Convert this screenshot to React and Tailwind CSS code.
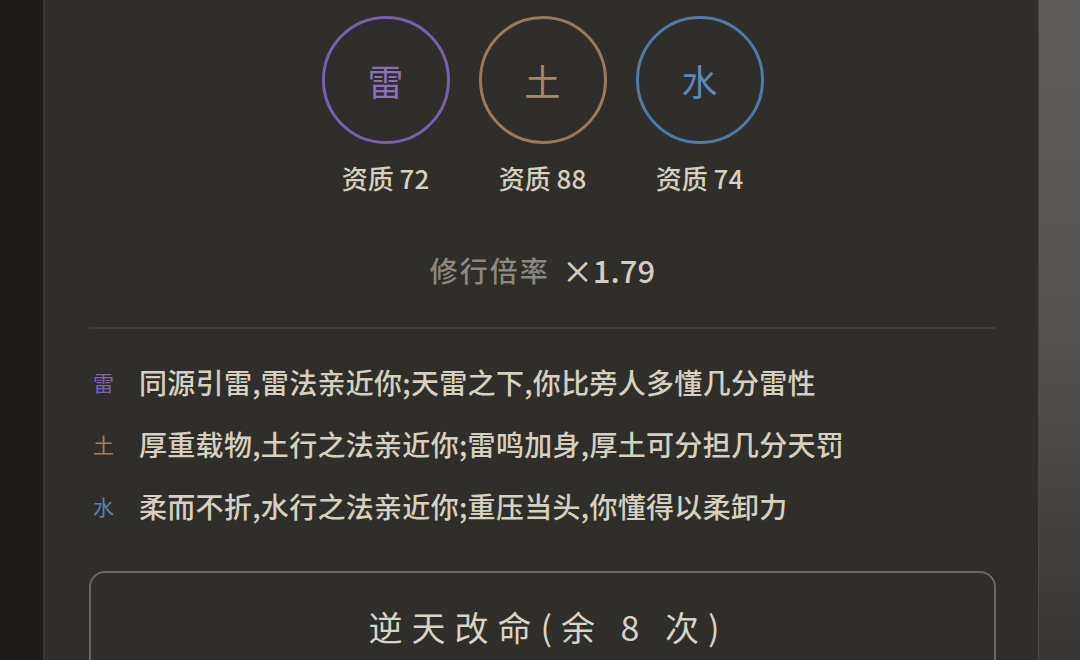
const roots = [
  { ch: '雷', score: 72, ring: 'border-[#7a5fae]', text: 'text-[#8a70bb]' },
  { ch: '土', score: 88, ring: 'border-[#9a7b57]', text: 'text-[#a8875e]' },
  { ch: '水', score: 74, ring: 'border-[#4f7aa8]', text: 'text-[#5d87b4]' },
];

const traits = [
  { ch: '雷', text: 'text-[#7e63b0]', desc: '同源引雷,雷法亲近你;天雷之下,你比旁人多懂几分雷性' },
  { ch: '土', text: 'text-[#a0805a]', desc: '厚重载物,土行之法亲近你;雷鸣加身,厚土可分担几分天罚' },
  { ch: '水', text: 'text-[#5a83ae]', desc: '柔而不折,水行之法亲近你;重压当头,你懂得以柔卸力' },
];

const sans = { fontFamily: '"Noto Sans CJK SC", "Noto Sans", sans-serif' };

export default function App() {
  return (
    <div className="flex h-[660px] w-[1080px] overflow-hidden bg-[#1c1a18]" style={sans}>
      <div className="w-[45px] shrink-0 border-r-2 border-[#3b3935] bg-[#1c1a18]" />

      <div className="flex-1 bg-[#302e2a] pl-[44px] pr-[42px]">
        {/* spirit roots */}
        <div className="flex justify-center gap-[29px] pt-[16px]">
          {roots.map((r) => (
            <div key={r.ch} className="flex w-[128px] flex-col items-center">
              <div className={`flex h-[128px] w-[128px] items-center justify-center rounded-full border-[3px] ${r.ring}`}>
                <span className={`text-[36px] leading-none ${r.text}`}>{r.ch}</span>
              </div>
              <div className="mt-[16px] text-[26px] font-medium leading-[36px] text-[#d6d0c0]">
                资质 {r.score}
              </div>
            </div>
          ))}
        </div>

        <div className="mt-[54px] flex items-center justify-center gap-[12px] leading-[40px]">
          <span className="text-[28px] font-medium tracking-[2px] text-[#8c8881]">修行倍率</span>
          <span className="text-[31px] font-medium text-[#d2cdc4]">×1.79</span>
        </div>

        <div className="mt-[37px] h-[2px] bg-[#413e39]" />

        {/* trait list */}
        <div className="mt-[33px] flex flex-col gap-[22px] pl-[4px]">
          {traits.map((t) => (
            <div key={t.ch} className="flex items-center leading-[40px]">
              <span className={`w-[46px] text-[21px] ${t.text}`}>{t.ch}</span>
              <span className="text-[28px] font-medium tracking-[0.3px] text-[#d6d0c0]">{t.desc}</span>
            </div>
          ))}
        </div>

        <button className="mt-[45px] flex h-[130px] w-full justify-center rounded-[16px] border-2 border-[#6b6863] pl-[12px] pt-[34px]">
          <span className="text-[34px] leading-[40px] tracking-[9px] text-[#d8d3c6]">
            逆天改命(余 8 次)
          </span>
        </button>
      </div>

      <div className="w-[42px] shrink-0 border-l border-[#4a4845] bg-gradient-to-b from-[#5e5c5a] via-[#555350] to-[#383634]" />
    </div>
  );
}
